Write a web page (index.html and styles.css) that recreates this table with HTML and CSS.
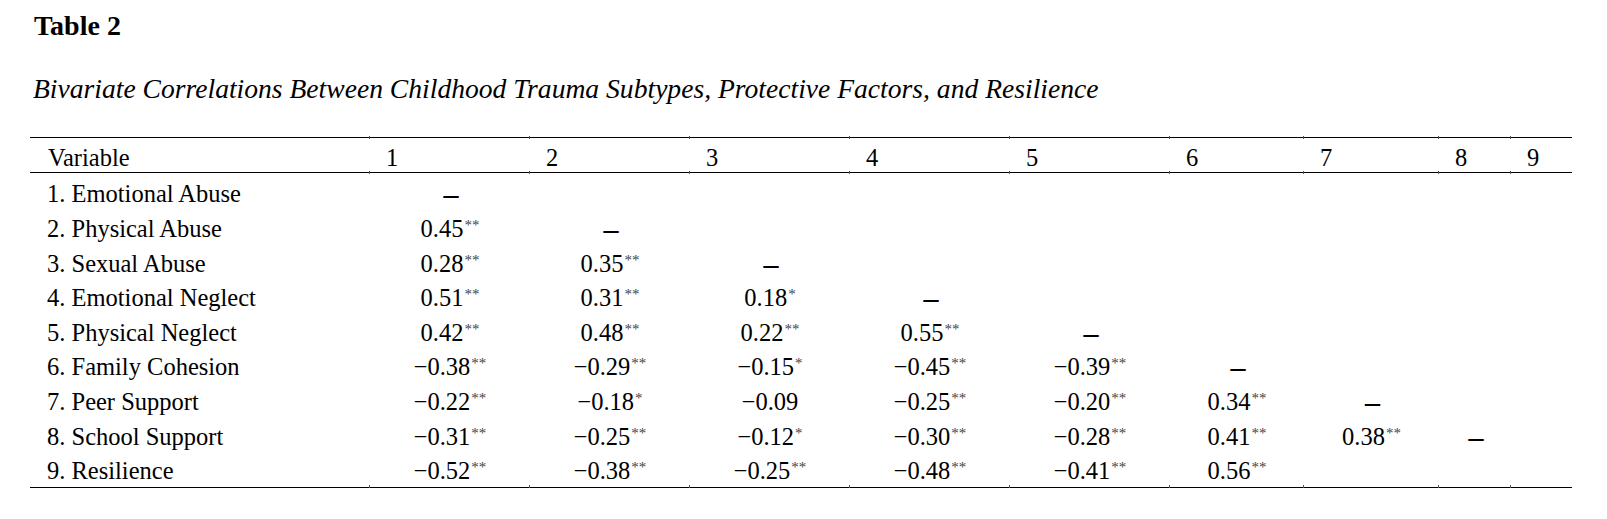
FILE: index.html
```html
<!DOCTYPE html>
<html lang="en">
<head>
<meta charset="utf-8">
<title>Table 2</title>
<link rel="stylesheet" href="styles.css">
</head>
<body>
<div class="page">
  <p class="table-no">Table 2</p>
  <p class="table-title">Bivariate Correlations Between Childhood Trauma Subtypes, Protective Factors, and Resilience</p>
  <table class="corr">
    <colgroup>
      <col class="c-var">
      <col class="c-wide"><col class="c-wide"><col class="c-wide"><col class="c-wide"><col class="c-wide">
      <col class="c-6"><col class="c-7"><col class="c-8"><col class="c-9">
    </colgroup>
    <thead>
      <tr><th>Variable</th><th>1</th><th>2</th><th>3</th><th>4</th><th>5</th><th>6</th><th>7</th><th>8</th><th>9</th></tr>
    </thead>
    <tbody>
      <tr><td class="label">1. Emotional Abuse</td><td><span class="dash">–</span></td><td></td><td></td><td></td><td></td><td></td><td></td><td></td><td></td></tr>
      <tr><td class="label">2. Physical Abuse</td><td>0.45<sup class="sig">**</sup></td><td><span class="dash">–</span></td><td></td><td></td><td></td><td></td><td></td><td></td><td></td></tr>
      <tr><td class="label">3. Sexual Abuse</td><td>0.28<sup class="sig">**</sup></td><td>0.35<sup class="sig">**</sup></td><td><span class="dash">–</span></td><td></td><td></td><td></td><td></td><td></td><td></td></tr>
      <tr><td class="label">4. Emotional Neglect</td><td>0.51<sup class="sig">**</sup></td><td>0.31<sup class="sig">**</sup></td><td>0.18<sup class="sig">*</sup></td><td><span class="dash">–</span></td><td></td><td></td><td></td><td></td><td></td></tr>
      <tr><td class="label">5. Physical Neglect</td><td>0.42<sup class="sig">**</sup></td><td>0.48<sup class="sig">**</sup></td><td>0.22<sup class="sig">**</sup></td><td>0.55<sup class="sig">**</sup></td><td><span class="dash">–</span></td><td></td><td></td><td></td><td></td></tr>
      <tr><td class="label">6. Family Cohesion</td><td>−0.38<sup class="sig">**</sup></td><td>−0.29<sup class="sig">**</sup></td><td>−0.15<sup class="sig">*</sup></td><td>−0.45<sup class="sig">**</sup></td><td>−0.39<sup class="sig">**</sup></td><td><span class="dash">–</span></td><td></td><td></td><td></td></tr>
      <tr><td class="label">7. Peer Support</td><td>−0.22<sup class="sig">**</sup></td><td>−0.18<sup class="sig">*</sup></td><td>−0.09</td><td>−0.25<sup class="sig">**</sup></td><td>−0.20<sup class="sig">**</sup></td><td>0.34<sup class="sig">**</sup></td><td><span class="dash">–</span></td><td></td><td></td></tr>
      <tr><td class="label">8. School Support</td><td>−0.31<sup class="sig">**</sup></td><td>−0.25<sup class="sig">**</sup></td><td>−0.12<sup class="sig">*</sup></td><td>−0.30<sup class="sig">**</sup></td><td>−0.28<sup class="sig">**</sup></td><td>0.41<sup class="sig">**</sup></td><td>0.38<sup class="sig">**</sup></td><td><span class="dash">–</span></td><td></td></tr>
      <tr><td class="label">9. Resilience</td><td>−0.52<sup class="sig">**</sup></td><td>−0.38<sup class="sig">**</sup></td><td>−0.25<sup class="sig">**</sup></td><td>−0.48<sup class="sig">**</sup></td><td>−0.41<sup class="sig">**</sup></td><td>0.56<sup class="sig">**</sup></td><td></td><td></td><td></td></tr>
    </tbody>
  </table>
</div>
</body>
</html>
```
FILE: styles.css
```css
html, body {
  margin: 0;
  background: #ffffff;
  color: #000000;
  font-family: "Liberation Serif", "Times New Roman", serif;
}

.page {
  padding: 10px 0 0 30px;
}

.table-no {
  margin: 0 0 0 4px;
  font-size: 28px;
  font-weight: bold;
  line-height: 32px;
}

.table-title {
  margin: 31px 0 0 3px;
  font-size: 27.6px;
  font-style: italic;
  line-height: 32px;
}

.corr {
  margin-top: 32px;
  border-collapse: separate;
  border-spacing: 0;
  table-layout: fixed;
  width: 1542px;
  font-size: 24.5px;
  white-space: nowrap;
}

.c-var { width: 340px; }
.c-wide { width: 160px; }
.c-6 { width: 134px; }
.c-7 { width: 135px; }
.c-8 { width: 72px; }
.c-9 { width: 61px; }

.corr th {
  position: relative;
  font-weight: normal;
  text-align: left;
  padding: 6px 0 0 16px;
  height: 28px;
  line-height: 28px;
  border-top: 1px solid #000;
  border-bottom: 1px solid #000;
  box-sizing: content-box;
}

.corr th:first-child {
  padding-left: 18px;
}

/* small cell-boundary ticks on the rules */
.corr th + th::before,
.corr th + th::after,
.corr tbody tr:last-child td + td::after {
  content: "";
  position: absolute;
  left: -1px;
  width: 1px;
  height: 3px;
  background: #555;
}

.corr th + th::before { top: -2px; }
.corr th + th::after { bottom: -2px; }

.corr td {
  padding: 0;
  line-height: 34.6px;
  text-align: center;
}

.corr td.label {
  text-align: left;
  padding-left: 17px;
}

.corr tbody tr:first-child td {
  padding-top: 4.4px;
}

.corr tbody tr:last-child td {
  position: relative;
  line-height: 32px;
  padding-top: 1px;
  border-bottom: 1px solid #000;
}

.corr tbody tr:last-child td + td::after {
  bottom: -1px;
}

.sig {
  font-size: 15px;
  line-height: 1;
  vertical-align: 7px;
  color: #444;
  margin-left: 1px;
}

.dash {
  display: inline-block;
  font-size: 30px;
  font-weight: bold;
  line-height: 1;
  vertical-align: -2px;
  transform: translateX(1px);
}
```
